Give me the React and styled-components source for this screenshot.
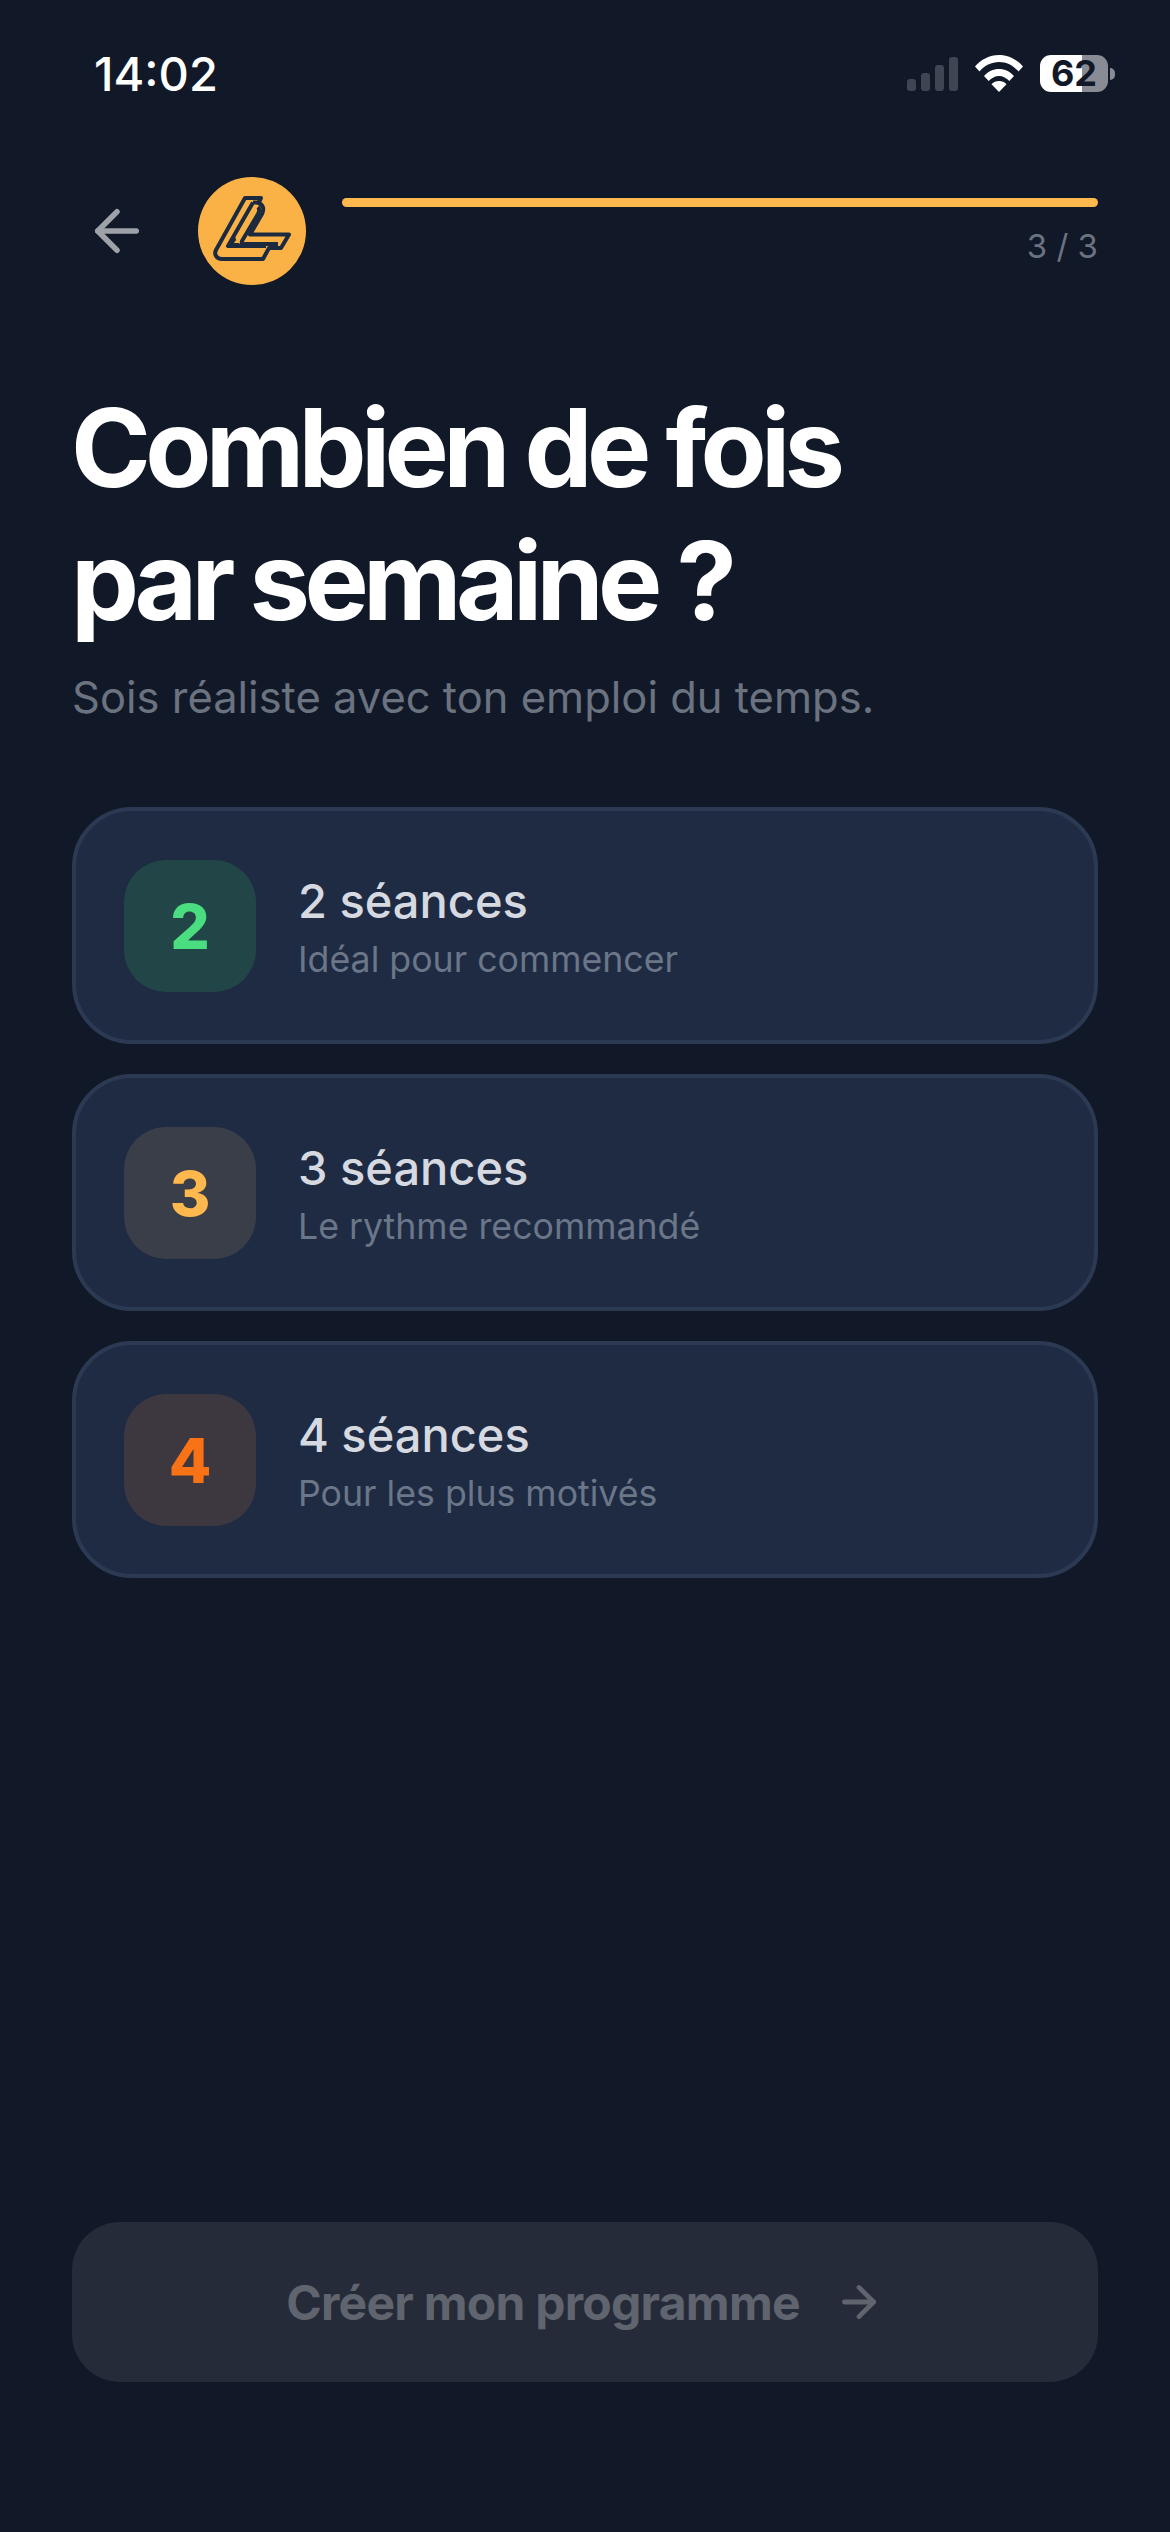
import React from 'react'
import styled, { createGlobalStyle } from 'styled-components'
import { ArrowLeft, ArrowRight } from 'lucide-react'

const GlobalStyle = createGlobalStyle`
  html, body {
    margin: 0;
    padding: 0;
    background: #111827;
  }
  body {
    font-family: Inter, "Noto Sans", sans-serif;
  }
`

const Screen = styled.div`
  width: 1170px;
  height: 2532px;
  box-sizing: border-box;
  background: #111827;
  display: flex;
  flex-direction: column;
  padding: 0 72px 150px;
  overflow: hidden;
`

const StatusBar = styled.div`
  height: 148px;
  flex: none;
  box-sizing: border-box;
  padding: 47px 0 0 22px;
  margin-right: -17px;
  display: flex;
  justify-content: space-between;
  align-items: flex-start;
`

const Clock = styled.div`
  font-size: 47px;
  line-height: 54px;
  font-weight: 500;
  color: #fff;
`

const StatusIcons = styled.div`
  display: flex;
  align-items: center;
  gap: 17px;
  height: 37px;
  margin-top: 8px;
`

const Signal = styled.div`
  display: flex;
  align-items: flex-end;
  gap: 5px;
  height: 34px;
`

const SignalBar = styled.div`
  width: 9px;
  height: ${({ h }) => h}px;
  border-radius: 3px;
  background: #3f4653;
`

const Battery = styled.div`
  display: flex;
  align-items: center;
  gap: 2px;
`

const BatteryBody = styled.div`
  width: 68px;
  height: 37px;
  border-radius: 11px;
  background: linear-gradient(90deg, #fff 62%, #8a8c95 62%);
  color: #111827;
  font-size: 36px;
  line-height: 37px;
  font-weight: 700;
  text-align: center;
`

const BatteryCap = styled.div`
  width: 5px;
  height: 12px;
  border-radius: 0 6px 6px 0;
  background: #8a8c95;
`

const Header = styled.div`
  display: flex;
  align-items: flex-start;
  flex: none;
  height: 108px;
  margin-top: 29px;
`

const BackButton = styled.div`
  width: 126px;
  height: 108px;
  flex: none;
  display: flex;
  align-items: center;
  padding-left: 12px;
  box-sizing: border-box;
  color: #9fa1a8;
`

const Logo = styled.div`
  width: 108px;
  height: 108px;
  flex: none;
`

const Progress = styled.div`
  flex: 1;
  margin-left: 36px;
  padding-top: 21px;
`

const Track = styled.div`
  height: 9px;
  border-radius: 5px;
  background: #ffb84d;
`

const Count = styled.div`
  margin-top: 19px;
  text-align: right;
  font-size: 33px;
  line-height: 40px;
  color: #6b7280;
`

const Title = styled.h1`
  margin: 96px 0 0 -1px;
  font-size: 108px;
  line-height: 133px;
  font-weight: 700;
  letter-spacing: -5.7px;
  color: #fff;
`

const Subtitle = styled.p`
  margin: 18px 0 0;
  font-size: 43.5px;
  line-height: 64px;
  color: #6b7280;
`

const Options = styled.div`
  display: flex;
  flex-direction: column;
  gap: 30px;
  margin-top: 78px;
`

const Card = styled.div`
  display: flex;
  align-items: center;
  gap: 42px;
  box-sizing: border-box;
  height: 237px;
  padding: 0 48px;
  border: 4.5px solid #2b3a52;
  border-radius: 60px;
  background: #1e2b43;
`

const Tile = styled.div`
  width: 132px;
  height: 132px;
  flex: none;
  box-sizing: border-box;
  padding-top: 2px;
  display: flex;
  align-items: center;
  justify-content: center;
  border-radius: 42px;
  background: ${({ bg }) => bg};
  color: ${({ fg }) => fg};
  font-size: 62px;
  font-weight: 800;
`

const CardText = styled.div`
  display: flex;
  flex-direction: column;
  gap: 8px;
  padding-top: 4px;
`

const CardTitle = styled.div`
  font-size: 47px;
  line-height: 54px;
  font-weight: 500;
  color: #d6d9e0;
`

const CardSub = styled.div`
  font-size: 35.7px;
  line-height: 46px;
  color: #6b7688;
`

const CreateButton = styled.div`
  margin-top: auto;
  height: 160px;
  flex: none;
  display: flex;
  align-items: center;
  justify-content: center;
  gap: 34px;
  border-radius: 48px;
  background: #252b38;
  color: #60646f;
  font-size: 48px;
  font-weight: 700;
  letter-spacing: -0.75px;
`

const options = [
  { n: 2, title: '2 séances', sub: 'Idéal pour commencer', bg: '#224548', fg: '#4ade80' },
  { n: 3, title: '3 séances', sub: 'Le rythme recommandé', bg: '#3a3e48', fg: '#ffb84d' },
  { n: 4, title: '4 séances', sub: 'Pour les plus motivés', bg: '#3d3840', fg: '#f97316' },
]

const Wifi = () => (
  <svg width="48" height="37" viewBox="0 0 48 37" fill="#fff">
    <path d="M0 11.5C6 4.5 14.5 0 24 0s18 4.5 24 11.5l-4.5 5C38.500 10.500 31.500 7 24 7S9.500 10.500 4.500 16.500z" />
    <path d="M9 21C13 16.500 18.200 14 24 14s11 2.500 15 7l-4.700 5C31.500 23 28 21 24 21s-7.500 2-10.300 5z" />
    <path d="M24 37l-7.500-7.800C18.500 27 21 26 24 26s5.500 1 7.500 3.200z" />
  </svg>
)

const LogoMark = () => (
  <svg width="108" height="108" viewBox="0 0 108 108">
    <circle cx="54" cy="54" r="54" fill="#fab246" />
    <g fill="none" stroke="#1c2a40" strokeWidth="4" strokeLinejoin="round">
      <path d="M47 21H63L60.500 26C66 28 66 33 64 37L52 57.500H91L83 71H71L65 82H24C18 82 16 77 18 73z" />
      <path d="M55 25.500H60.500M55 25.500L30 69H68" />
      <path d="M60 30C62 32 61 35 60 37L44 64C43 67 45 67 48 67H80" />
    </g>
    <path d="M32 67.500L37 59.500C38 64 40 66 43 67.500z" fill="#1c2a40" />
    <path d="M36 66L38 63L42 66z" fill="#fab246" />
  </svg>
)

export default function App() {
  return (
    <Screen>
      <GlobalStyle />
      <StatusBar>
        <Clock>14:02</Clock>
        <StatusIcons>
          <Signal>
            {[12, 18, 26, 34].map((h) => (
              <SignalBar key={h} h={h} />
            ))}
          </Signal>
          <Wifi />
          <Battery>
            <BatteryBody>62</BatteryBody>
            <BatteryCap />
          </Battery>
        </StatusIcons>
      </StatusBar>

      <Header>
        <BackButton>
          <ArrowLeft size={66} strokeWidth={2} />
        </BackButton>
        <Logo>
          <LogoMark />
        </Logo>
        <Progress>
          <Track />
          <Count>3 / 3</Count>
        </Progress>
      </Header>

      <Title>
        Combien de fois
        <br />
        par semaine ?
      </Title>
      <Subtitle>Sois réaliste avec ton emploi du temps.</Subtitle>

      <Options>
        {options.map((o) => (
          <Card key={o.n}>
            <Tile bg={o.bg} fg={o.fg}>
              {o.n}
            </Tile>
            <CardText>
              <CardTitle>{o.title}</CardTitle>
              <CardSub>{o.sub}</CardSub>
            </CardText>
          </Card>
        ))}
      </Options>

      <CreateButton>
        Créer mon programme
        <ArrowRight size={50} strokeWidth={2.3} />
      </CreateButton>
    </Screen>
  )
}
